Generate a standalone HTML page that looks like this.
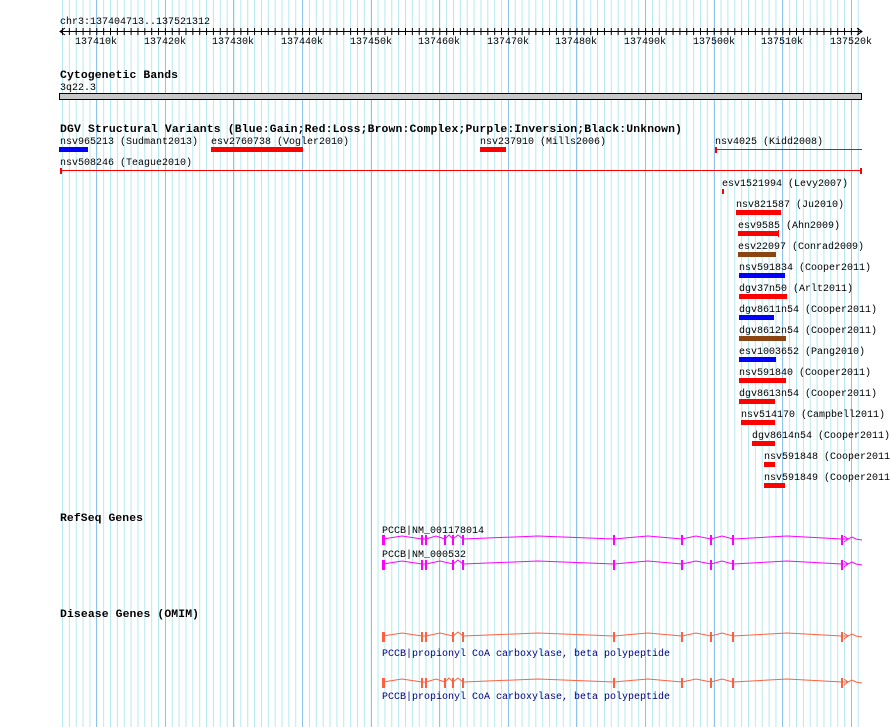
<!DOCTYPE html>
<html><head><meta charset="utf-8"><style>
html,body{margin:0;padding:0;background:#fff}
svg{display:block}
text{font-family:"Liberation Mono",monospace;font-size:10px;fill:#000}
.b{font-weight:bold;font-size:11.4px}
.n{fill:#000080}
</style></head><body>
<svg width="890" height="727" xmlns="http://www.w3.org/2000/svg">
<defs>
<pattern id="g" x="62" y="0" width="6.86" height="727" patternUnits="userSpaceOnUse"><rect x="0" y="0" width="1" height="727" fill="#b4e9f0"/></pattern>
<pattern id="t" x="62" y="0" width="6.86" height="10" patternUnits="userSpaceOnUse"><rect x="0" y="0" width="1" height="10" fill="#000"/></pattern>
</defs>
<rect x="61.5" y="0" width="801" height="727" fill="url(#g)"/>
<g fill="#8cc4ea">
<rect x="96" y="0" width="1" height="727"/><rect x="165" y="0" width="1" height="727"/><rect x="233" y="0" width="1" height="727"/><rect x="302" y="0" width="1" height="727"/><rect x="371" y="0" width="1" height="727"/><rect x="439" y="0" width="1" height="727"/><rect x="508" y="0" width="1" height="727"/><rect x="576" y="0" width="1" height="727"/><rect x="645" y="0" width="1" height="727"/><rect x="714" y="0" width="1" height="727"/><rect x="782" y="0" width="1" height="727"/><rect x="851" y="0" width="1" height="727"/>
</g>
<!-- ruler -->
<text x="60" y="24">chr3:137404713..137521312</text>
<rect x="60" y="31" width="802" height="1" fill="#000"/>
<rect x="62" y="28" width="798" height="7" fill="url(#t)"/>
<path d="M65 28 L60 31.5 L65 35 M857 28 L862 31.5 L857 35" stroke="#000" fill="none"/>
<g text-anchor="middle">
<text x="96" y="44">137410k</text><text x="165" y="44">137420k</text><text x="233" y="44">137430k</text><text x="302" y="44">137440k</text><text x="371" y="44">137450k</text><text x="439" y="44">137460k</text><text x="508" y="44">137470k</text><text x="576" y="44">137480k</text><text x="645" y="44">137490k</text><text x="714" y="44">137500k</text><text x="782" y="44">137510k</text><text x="851" y="44">137520k</text>
</g>
<!-- cyto -->
<text class="b" x="60" y="78" textLength="118">Cytogenetic Bands</text>
<text x="60" y="90">3q22.3</text>
<rect x="59.5" y="93.5" width="802" height="6" fill="#c8c8c8" stroke="#000"/>
<!-- DGV -->
<text class="b" x="60" y="132" textLength="622">DGV Structural Variants (Blue:Gain;Red:Loss;Brown:Complex;Purple:Inversion;Black:Unknown)</text>
<text x="60" y="144">nsv965213 (Sudmant2013)</text><rect x="59" y="147" width="29" height="5" fill="#0000ff"/>
<text x="211" y="144">esv2760738 (Vogler2010)</text><rect x="211" y="147" width="92" height="5" fill="#ff0000"/>
<text x="480" y="144">nsv237910 (Mills2006)</text><rect x="480" y="147" width="26" height="5" fill="#ff0000"/>
<text x="715" y="144">nsv4025 (Kidd2008)</text><rect x="715" y="149" width="147" height="1" fill="#ff0000"/><rect x="715" y="147" width="2" height="6" fill="#ff0000"/>
<text x="60" y="165">nsv508246 (Teague2010)</text><rect x="60" y="170" width="802" height="1" fill="#ff0000"/><rect x="60" y="168" width="2" height="6" fill="#ff0000"/><rect x="860" y="168" width="2" height="6" fill="#ff0000"/>
<text x="722" y="186">esv1521994 (Levy2007)</text><rect x="722" y="189" width="2" height="5" fill="#ff0000"/>
<text x="736" y="207">nsv821587 (Ju2010)</text><rect x="736" y="210" width="45" height="5" fill="#ff0000"/>
<text x="738" y="228">esv9585 (Ahn2009)</text><rect x="738" y="231" width="40" height="5" fill="#ff0000"/><rect x="778" y="230" width="1" height="7" fill="#ff0000"/>
<text x="738" y="249">esv22097 (Conrad2009)</text><rect x="738" y="252" width="38" height="5" fill="#8b4513"/>
<text x="739" y="270">nsv591834 (Cooper2011)</text><rect x="739" y="273" width="46" height="5" fill="#0000ff"/>
<text x="739" y="291">dgv37n50 (Arlt2011)</text><rect x="739" y="294" width="48" height="5" fill="#ff0000"/>
<text x="739" y="312">dgv8611n54 (Cooper2011)</text><rect x="739" y="315" width="35" height="5" fill="#0000ff"/>
<text x="739" y="333">dgv8612n54 (Cooper2011)</text><rect x="739" y="336" width="47" height="5" fill="#8b4513"/>
<text x="739" y="354">esv1003652 (Pang2010)</text><rect x="739" y="357" width="37" height="5" fill="#0000ff"/>
<text x="739" y="375">nsv591840 (Cooper2011)</text><rect x="739" y="378" width="47" height="5" fill="#ff0000"/>
<text x="739" y="396">dgv8613n54 (Cooper2011)</text><rect x="739" y="399" width="36" height="5" fill="#ff0000"/>
<text x="741" y="417">nsv514170 (Campbell2011)</text><rect x="741" y="420" width="34" height="5" fill="#ff0000"/>
<text x="752" y="438">dgv8614n54 (Cooper2011)</text><rect x="752" y="441" width="23" height="5" fill="#ff0000"/>
<text x="764" y="459">nsv591848 (Cooper2011)</text><rect x="764" y="462" width="11" height="5" fill="#ff0000"/>
<text x="764" y="480">nsv591849 (Cooper2011)</text><rect x="764" y="483" width="21" height="5" fill="#ff0000"/>
<!-- RefSeq -->
<text class="b" x="60" y="521" textLength="83">RefSeq Genes</text>
<text x="382" y="533">PCCB|NM_001178014</text>
<g stroke="#ff00ff" fill="none">
<polyline points="383,539 402,536 422,539 426,539 436,536 445,539 449,535 453,539 458,535 463,539 538,536 614,539 648,536 682,539 696,536 711,539 722,536 733,539 787,536 842,539 848,539 852,537 856,539 862,540"/>
<path d="M844 536 L848 539 L844 542"/>
</g>
<g fill="#ff00ff">
<rect x="382" y="535" width="3" height="10"/><rect x="421" y="535" width="2" height="10"/><rect x="425" y="535" width="2" height="10"/><rect x="444" y="535" width="2" height="10"/><rect x="452" y="535" width="2" height="10"/><rect x="462" y="535" width="2" height="10"/><rect x="613" y="535" width="2" height="10"/><rect x="681" y="535" width="2" height="10"/><rect x="710" y="535" width="2" height="10"/><rect x="732" y="535" width="2" height="10"/><rect x="841" y="535" width="2" height="10"/>
</g>
<text x="382" y="557">PCCB|NM_000532</text>
<g stroke="#ff00ff" fill="none">
<polyline points="383,564 402,561 422,564 426,564 440,561 453,564 458,560 463,564 538,561 614,564 648,561 682,564 696,561 711,564 722,561 733,564 787,561 842,564 848,564 852,562 856,564 862,565"/>
<path d="M844 561 L848 564 L844 567"/>
</g>
<g fill="#ff00ff">
<rect x="382" y="560" width="3" height="10"/><rect x="421" y="560" width="2" height="10"/><rect x="425" y="560" width="2" height="10"/><rect x="452" y="560" width="2" height="10"/><rect x="462" y="560" width="2" height="10"/><rect x="613" y="560" width="2" height="10"/><rect x="681" y="560" width="2" height="10"/><rect x="710" y="560" width="2" height="10"/><rect x="732" y="560" width="2" height="10"/><rect x="841" y="560" width="2" height="10"/>
</g>
<!-- Disease -->
<text class="b" x="60" y="617" textLength="139">Disease Genes (OMIM)</text>
<g stroke="#ff6040" fill="none">
<polyline points="383,636 402,633 422,636 426,636 440,633 453,636 458,632 463,636 538,633 614,636 648,633 682,636 696,633 711,636 722,633 733,636 787,633 842,636 848,636 852,634 856,636 862,637"/>
<path d="M844 633 L848 636 L844 639"/>
<polyline points="383,682 402,679 422,682 426,682 436,679 445,682 449,678 453,682 458,678 463,682 538,679 614,682 648,679 682,682 696,679 711,682 722,679 733,682 787,679 842,682 848,682 852,680 856,682 862,683"/>
<path d="M844 679 L848 682 L844 685"/>
</g>
<g fill="#ff6040">
<rect x="382" y="632" width="3" height="10"/><rect x="421" y="632" width="2" height="10"/><rect x="425" y="632" width="2" height="10"/><rect x="452" y="632" width="2" height="10"/><rect x="462" y="632" width="2" height="10"/><rect x="613" y="632" width="2" height="10"/><rect x="681" y="632" width="2" height="10"/><rect x="710" y="632" width="2" height="10"/><rect x="732" y="632" width="2" height="10"/><rect x="841" y="632" width="2" height="10"/>
<rect x="382" y="678" width="3" height="10"/><rect x="421" y="678" width="2" height="10"/><rect x="425" y="678" width="2" height="10"/><rect x="444" y="678" width="2" height="10"/><rect x="452" y="678" width="2" height="10"/><rect x="462" y="678" width="2" height="10"/><rect x="613" y="678" width="2" height="10"/><rect x="681" y="678" width="2" height="10"/><rect x="710" y="678" width="2" height="10"/><rect x="732" y="678" width="2" height="10"/><rect x="841" y="678" width="2" height="10"/>
</g>
<text class="n" x="382" y="656">PCCB|propionyl CoA carboxylase, beta polypeptide</text>
<text class="n" x="382" y="699">PCCB|propionyl CoA carboxylase, beta polypeptide</text>
</svg>
</body></html>
